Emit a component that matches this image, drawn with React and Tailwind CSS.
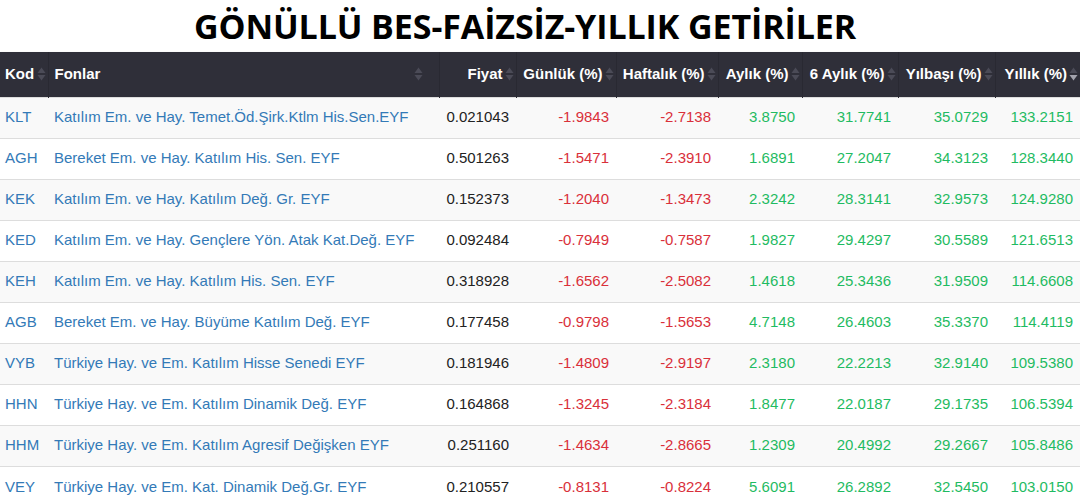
import React from "react";

const rows = [
  ["KLT", "Katılım Em. ve Hay. Temet.Öd.Şirk.Ktlm His.Sen.EYF", "0.021043", "-1.9843", "-2.7138", "3.8750", "31.7741", "35.0729", "133.2151"],
  ["AGH", "Bereket Em. ve Hay. Katılım His. Sen. EYF", "0.501263", "-1.5471", "-2.3910", "1.6891", "27.2047", "34.3123", "128.3440"],
  ["KEK", "Katılım Em. ve Hay. Katılım Değ. Gr. EYF", "0.152373", "-1.2040", "-1.3473", "2.3242", "28.3141", "32.9573", "124.9280"],
  ["KED", "Katılım Em. ve Hay. Gençlere Yön. Atak Kat.Değ. EYF", "0.092484", "-0.7949", "-0.7587", "1.9827", "29.4297", "30.5589", "121.6513"],
  ["KEH", "Katılım Em. ve Hay. Katılım His. Sen. EYF", "0.318928", "-1.6562", "-2.5082", "1.4618", "25.3436", "31.9509", "114.6608"],
  ["AGB", "Bereket Em. ve Hay. Büyüme Katılım Değ. EYF", "0.177458", "-0.9798", "-1.5653", "4.7148", "26.4603", "35.3370", "114.4119"],
  ["VYB", "Türkiye Hay. ve Em. Katılım Hisse Senedi EYF", "0.181946", "-1.4809", "-2.9197", "2.3180", "22.2213", "32.9140", "109.5380"],
  ["HHN", "Türkiye Hay. ve Em. Katılım Dinamik Değ. EYF", "0.164868", "-1.3245", "-2.3184", "1.8477", "22.0187", "29.1735", "106.5394"],
  ["HHM", "Türkiye Hay. ve Em. Katılım Agresif Değişken EYF", "0.251160", "-1.4634", "-2.8665", "1.2309", "20.4992", "29.2667", "105.8486"],
  ["VEY", "Türkiye Hay. ve Em. Kat. Dinamik Değ.Gr. EYF", "0.210557", "-0.8131", "-0.8224", "5.6091", "26.2892", "32.5450", "103.0150"],
];

function SortIcon({ active }) {
  return (
    <svg width="9" height="16" viewBox="0 0 9 16" className="shrink-0">
      <path d="M4.5 1.5 L8.5 7 L0.5 7 Z" fill="#4b4b57" />
      <path d="M4.5 14.5 L8.5 9 L0.5 9 Z" fill={active ? "#a3a3ad" : "#4b4b57"} />
    </svg>
  );
}

const heads = [
  { t: "Fiyat", w: "w-[77px]" },
  { t: "Günlük (%)", w: "w-[100px]" },
  { t: "Haftalık (%)", w: "w-[102px]" },
  { t: "Aylık (%)", w: "w-[84px]" },
  { t: "6 Aylık (%)", w: "w-[96px]" },
  { t: "Yılbaşı (%)", w: "w-[97px]" },
  { t: "Yıllık (%)", w: "w-[85px]", active: true },
];

export default function App() {
  return (
    <div className="w-[1080px] h-[502px] overflow-hidden bg-white font-['Liberation_Sans',Arial,sans-serif]">
      <div className="h-[52px] flex items-center justify-center pr-[30px]">
        <h1 className="text-[34px] leading-none font-bold text-black font-['Open_Sans',sans-serif] tracking-[-0.1px]">
          GÖNÜLLÜ BES-FAİZSİZ-YILLIK GETİRİLER
        </h1>
      </div>
      <table className="w-[1080px] table-fixed border-collapse text-[15px]">
        <thead>
          <tr className="bg-[#2f2f39] h-[45px] text-white shadow-[0_2px_3px_rgba(0,0,0,0.35)]">
            <th className="w-[48px] p-0 pl-[5px] pr-[2px] font-bold border-r border-[#292932]">
              <div className="flex items-center justify-between">
                <span>Kod</span>
                <SortIcon />
              </div>
            </th>
            <th className="w-[391px] p-0 pl-[6px] pr-[16px] font-bold border-r border-[#292932]">
              <div className="flex items-center justify-between">
                <span>Fonlar</span>
                <SortIcon />
              </div>
            </th>
            {heads.map((h, i) => (
              <th key={i} className={`${h.w} p-0 pr-[2px] font-bold border-r border-[#292932] last:border-r-0`}>
                <div className="flex items-center justify-end gap-[2px]">
                  <span className="whitespace-nowrap">{h.t}</span>
                  <SortIcon active={h.active} />
                </div>
              </th>
            ))}
          </tr>
        </thead>
        <tbody>
          {rows.map((r, i) => (
            <tr key={i} className={`h-[41px] border-t border-[#dddddd] ${i % 2 === 0 ? "bg-[#f9f9f9]" : "bg-white"}`}>
              <td className="pl-[5px] text-[#337ab7] whitespace-nowrap">{r[0]}</td>
              <td className="pl-[6px] text-[#337ab7] whitespace-nowrap">{r[1]}</td>
              <td className="pr-[7px] text-right text-[#222]">{r[2]}</td>
              <td className="pr-[7px] text-right text-[#d9303a]">{r[3]}</td>
              <td className="pr-[7px] text-right text-[#d9303a]">{r[4]}</td>
              <td className="pr-[7px] text-right text-[#1fbb62]">{r[5]}</td>
              <td className="pr-[7px] text-right text-[#1fbb62]">{r[6]}</td>
              <td className="pr-[7px] text-right text-[#1fbb62]">{r[7]}</td>
              <td className="pr-[7px] text-right text-[#1fbb62]">{r[8]}</td>
            </tr>
          ))}
        </tbody>
      </table>
    </div>
  );
}
